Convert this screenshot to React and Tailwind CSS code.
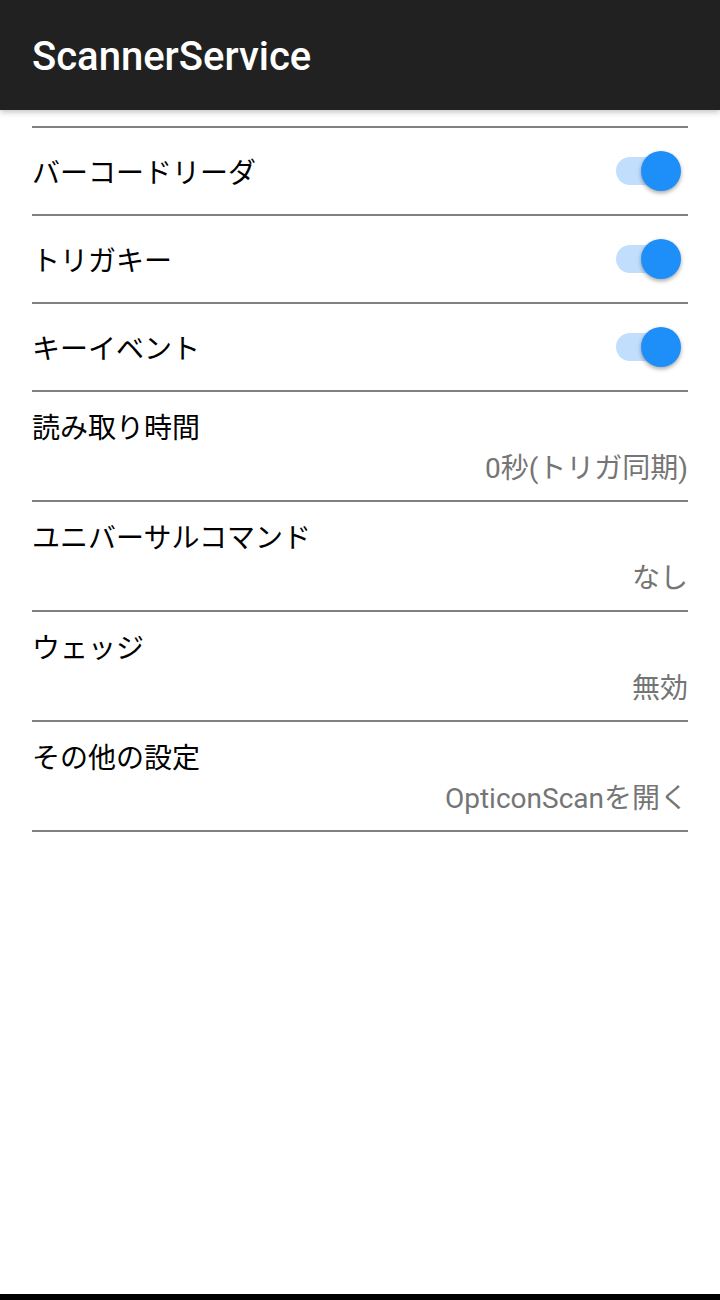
import React, { useState } from "react"

const jp = { fontFamily: 'Roboto, "Noto Sans CJK JP", sans-serif' }

const Toggle = ({ on, onChange }) => (
  <button onClick={onChange} className="relative w-[65px] h-10 mr-[7px] shrink-0">
    <span
      className={`absolute left-0 top-[6px] h-7 w-[58px] rounded-full ${on ? "bg-[#c1dffd]" : "bg-[#b9b9b9]"}`}
    />
    <span
      className={`absolute top-0 h-10 w-10 rounded-full shadow-[0_2px_4px_rgba(0,0,0,0.35)] ${
        on ? "right-0 bg-[#1e8ff8]" : "left-0 bg-[#f1f1f1]"
      }`}
    />
  </button>
)

const SwitchRow = ({ label, on, onChange }) => (
  <div className="flex items-center justify-between h-[88px] border-b-2 border-[#808080]">
    <span className="text-[28px] text-black leading-[40px] pt-[5px]">{label}</span>
    <Toggle on={on} onChange={onChange} />
  </div>
)

const ValueRow = ({ label, value }) => (
  <div className="flex flex-col pt-[17px] pb-[11px] border-b-2 border-[#808080]">
    <span className="text-[28px] text-black leading-[40px]">{label}</span>
    <span className="text-[28px] text-[#757575] leading-[40px] text-right">{value}</span>
  </div>
)

export default function App() {
  const [reader, setReader] = useState(true)
  const [trigger, setTrigger] = useState(true)
  const [keyEvent, setKeyEvent] = useState(true)

  return (
    <div className="min-h-[1300px] flex flex-col bg-white" style={jp}>
      <header className="relative z-10 h-[110px] bg-[#212121] flex items-center px-8 pt-1 shadow-[0_2px_6px_rgba(0,0,0,0.25)]">
        <h1 className="text-white text-[40px] font-medium">ScannerService</h1>
      </header>

      <main className="flex-1 px-8 pt-4">
        <div className="border-t-2 border-[#808080]">
          <SwitchRow label="バーコードリーダ" on={reader} onChange={() => setReader(!reader)} />
          <SwitchRow label="トリガキー" on={trigger} onChange={() => setTrigger(!trigger)} />
          <SwitchRow label="キーイベント" on={keyEvent} onChange={() => setKeyEvent(!keyEvent)} />
          <ValueRow label="読み取り時間" value="0秒(トリガ同期)" />
          <ValueRow label="ユニバーサルコマンド" value="なし" />
          <ValueRow label="ウェッジ" value="無効" />
          <ValueRow label="その他の設定" value="OpticonScanを開く" />
        </div>
      </main>

      <div className="h-[6px] bg-black" />
    </div>
  )
}
